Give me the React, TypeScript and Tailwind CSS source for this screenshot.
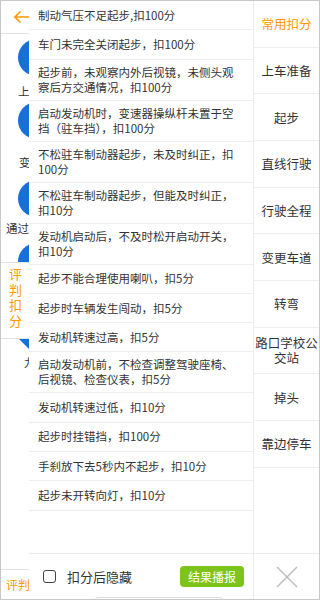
import React from 'react';

const rows = [
  '制动气压不足起步,扣100分',
  '车门未完全关闭起步，扣100分',
  '起步前，未观察内外后视镜，未侧头观察后方交通情况，扣100分',
  '启动发动机时，变速器操纵杆未置于空挡（驻车挡），扣100分',
  '不松驻车制动器起步，未及时纠正，扣100分',
  '不松驻车制动器起步，但能及时纠正，扣10分',
  '发动机启动后，不及时松开启动开关，扣10分',
  '起步不能合理使用喇叭，扣5分',
  '起步时车辆发生闯动，扣5分',
  '发动机转速过高，扣5分',
  '启动发动机前，不检查调整驾驶座椅、后视镜、检查仪表，扣5分',
  '发动机转速过低，扣10分',
  '起步时挂错挡，扣100分',
  '手刹放下去5秒内不起步，扣10分',
  '起步未开转向灯，扣10分',
];

const tabs = [
  '常用扣分',
  '上车准备',
  '起步',
  '直线行驶',
  '行驶全程',
  '变更车道',
  '转弯',
  '路口学校公交站',
  '掉头',
  '靠边停车',
];

// page under the overlay, only its left strip shows
const BackPage = () => (
  <div className="flex h-full flex-col">
    <div className="flex h-[33px] shrink-0 items-center border-b border-[#e3e3e3] pl-[12px]">
      <svg width="18" height="12" viewBox="0 0 18 12" fill="none">
        <path
          d="M17.5 6H1.8M7 1L1.8 6L7 11"
          stroke="#ff9800"
          strokeWidth="1.7"
          strokeLinecap="round"
          strokeLinejoin="round"
        />
      </svg>
    </div>
    <div className="w-[29px] text-[11.5px] leading-[15px] text-[#333]">
      <div className="ml-[17px] mt-[5px] h-[37px] w-[37px] rounded-full bg-[#1670d8]" />
      <div className="mt-[8px] pl-[17px]">上</div>
      <div className="ml-[17px] mt-[3px] h-[37px] w-[37px] rounded-full bg-[#1670d8]" />
      <div className="mt-[16px] pl-[18px]">变</div>
      <div className="ml-[17px] mt-[10px] h-[37px] w-[37px] rounded-full bg-[#1670d8]" />
      <div className="mt-[4px] pl-[5px]">通过</div>
      <div className="mt-[7px] h-[19px] overflow-hidden">
        <div className="ml-[17px] h-[37px] w-[37px] rounded-full bg-[#1670d8]" />
      </div>
    </div>
    <div className="flex h-[77px] w-[29px] flex-col border-y border-[#e3e3e3] pl-[8px] pt-[3px] text-[13px] leading-[15.5px] text-[#ff9800]">
      <span>评</span>
      <span>判</span>
      <span>扣</span>
      <span>分</span>
    </div>
    <div className="ml-[18px]">
      <svg width="11" height="11" viewBox="0 0 11 11">
        <polygon points="0,0 11,0 11,11" fill="#1670d8" />
      </svg>
    </div>
    <div className="mt-[5px] w-[29px] overflow-hidden pl-[23px] text-[11.5px] leading-[15px] text-[#333]">
      九
    </div>
    <div className="flex-1" />
    <div className="flex h-[30px] w-[29px] items-center border-t border-[#e3e3e3] pl-[5px] text-[12px] text-[#ff9800]">
      评判
    </div>
  </div>
);

export default function App() {
  return (
    <div className="relative h-[600px] w-[320px] overflow-hidden border border-[#c8c8c8] bg-white font-['Noto_Sans_CJK_SC',sans-serif]">
      <BackPage />
      <div className="absolute inset-y-0 left-[28px] right-0 flex">
        <div className="flex w-[224px] flex-col bg-white">
          <ul className="flex-1">
            {rows.map((row) => (
              <li
                key={row}
                className="flex min-h-[29.3px] items-center border-b border-[#eeeeee] py-[5px] pl-[9px] pr-[12px] text-[11.5px] leading-[15px] text-[#333]"
              >
                {row}
              </li>
            ))}
          </ul>
          <div className="relative flex h-[46px] shrink-0 items-center justify-between border-t border-[#ececec] pl-[14px] pr-[9px]">
            <label className="flex items-center gap-[11px] text-[13px] text-[#333]">
              <span className="h-[13px] w-[13px] rounded-[3px] border-[1.5px] border-[#444]" />
              扣分后隐藏
            </label>
            <button className="flex h-[21px] w-[64px] items-center justify-center rounded-[4px] bg-[#7dc41a] text-[12px] text-white">
              结果播报
            </button>
            <div className="absolute bottom-[-2px] left-[66px] h-[4px] w-[128px] rounded-t-[3px] border border-[#dddddd]" />
          </div>
        </div>
        <div className="flex flex-1 flex-col border-l border-[#ececec] bg-white">
          {tabs.map((tab, i) => (
            <div
              key={tab}
              className={
                'flex h-[46.67px] items-center justify-center border-b border-[#eeeeee] text-center text-[12.5px] leading-[15px] ' +
                (i === 0 ? 'text-[#ff9800]' : 'text-[#333]')
              }
            >
              {tab}
            </div>
          ))}
          <div className="flex-1" />
          <div className="flex h-[46px] shrink-0 items-center justify-center border-t border-[#ececec]">
            <svg width="22" height="22" viewBox="0 0 22 22">
              <path d="M1 1L21 21M21 1L1 21" stroke="#bdbdbd" strokeWidth="1.5" />
            </svg>
          </div>
        </div>
      </div>
    </div>
  );
}
